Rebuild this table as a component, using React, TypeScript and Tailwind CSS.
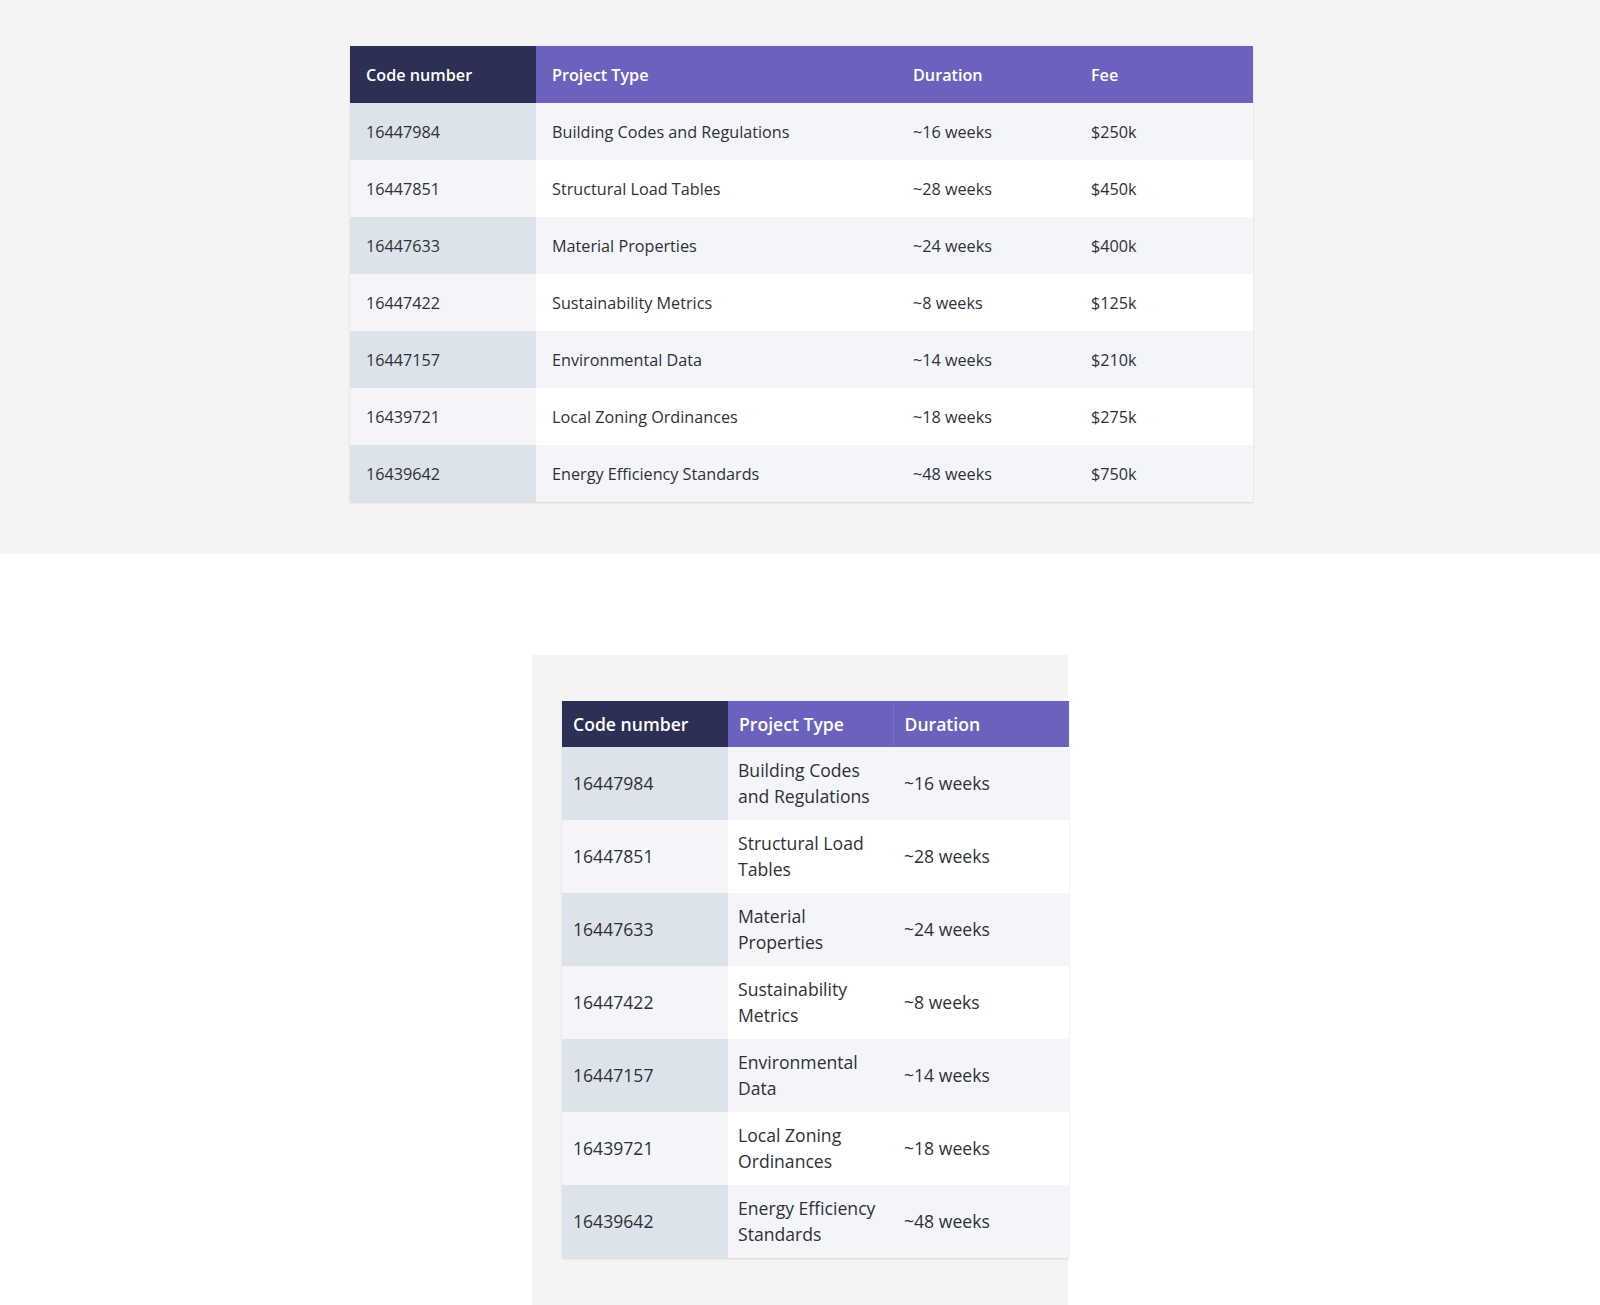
import React from 'react';

const rows = [
    { code: '16447984', type: 'Building Codes and Regulations', duration: '~16 weeks', fee: '$250k' },
    { code: '16447851', type: 'Structural Load Tables', duration: '~28 weeks', fee: '$450k' },
    { code: '16447633', type: 'Material Properties', duration: '~24 weeks', fee: '$400k' },
    { code: '16447422', type: 'Sustainability Metrics', duration: '~8 weeks', fee: '$125k' },
    { code: '16447157', type: 'Environmental Data', duration: '~14 weeks', fee: '$210k' },
    { code: '16439721', type: 'Local Zoning Ordinances', duration: '~18 weeks', fee: '$275k' },
    { code: '16439642', type: 'Energy Efficiency Standards', duration: '~48 weeks', fee: '$750k' },
];

const WideTable: React.FC = () => (
    <table className="w-[903px] border-collapse table-fixed text-[16.2px] text-[#2f3138] shadow-[0_1px_2px_rgba(0,0,0,0.12)]">
        <colgroup>
            <col className="w-[186px]" />
            <col className="w-[361px]" />
            <col className="w-[178px]" />
            <col className="w-[178px]" />
        </colgroup>
        <thead>
            <tr className="h-[57px] text-white text-left">
                <th className="bg-[#2b3054] px-4 pt-[2px] font-semibold">Code number</th>
                <th className="bg-[#6a62bc] px-4 pt-[2px] font-semibold">Project Type</th>
                <th className="bg-[#6a62bc] px-4 pt-[2px] font-semibold">Duration</th>
                <th className="bg-[#6a62bc] px-4 pt-[2px] font-semibold">Fee</th>
            </tr>
        </thead>
        <tbody>
            {rows.map((r, i) => {
                const odd = i % 2 === 0;
                return (
                    <tr key={r.code} className={`h-[57px] ${odd ? 'bg-[#f3f5f9]' : 'bg-white'}`}>
                        <td className={`px-4 pt-[2px] ${odd ? 'bg-[#dde3ea]' : 'bg-[#f3f5f9]'}`}>{r.code}</td>
                        <td className="px-4 pt-[2px]">{r.type}</td>
                        <td className="px-4 pt-[2px]">{r.duration}</td>
                        <td className="px-4 pt-[2px]">{r.fee}</td>
                    </tr>
                );
            })}
        </tbody>
    </table>
);

const NarrowTable: React.FC = () => (
    <table className="w-[507px] border-collapse table-fixed text-[17.6px] leading-[26px] text-[#2f3138] shadow-[0_1px_2px_rgba(0,0,0,0.12)]">
        <colgroup>
            <col className="w-[166px]" />
            <col className="w-[165px]" />
            <col className="w-[176px]" />
        </colgroup>
        <thead>
            <tr className="h-[46px] text-white text-left">
                <th className="bg-[#2b3054] px-[11px] font-semibold">Code number</th>
                <th className="bg-[#6a62bc] px-[11px] font-semibold border-r border-[#7a73c6]">Project Type</th>
                <th className="bg-[#6a62bc] px-[11px] font-semibold">Duration</th>
            </tr>
        </thead>
        <tbody>
            {rows.map((r, i) => {
                const odd = i % 2 === 0;
                return (
                    <tr key={r.code} className={`h-[73px] ${odd ? 'bg-[#f3f5f9]' : 'bg-white'}`}>
                        <td className={`px-[11px] pb-[2px] ${odd ? 'bg-[#dde3ea]' : 'bg-[#f3f5f9]'}`}>{r.code}</td>
                        <td className="pl-[10px] pr-3 pb-[2px]">{r.type}</td>
                        <td className="px-[11px] pb-[2px]">{r.duration}</td>
                    </tr>
                );
            })}
        </tbody>
    </table>
);

export default function App() {
    return (
        <div className="min-h-[1305px] bg-white" style={{ fontFamily: '"Open Sans", "Noto Sans", sans-serif' }}>
            <section className="h-[554px] bg-[#f4f4f4] pt-[46px] pl-[3px] flex justify-center items-start">
                <WideTable />
            </section>
            <section className="flex justify-center pt-[101px]">
                <div className="w-[536px] h-[650px] bg-[#f4f4f4] pt-[46px] pl-[30px]">
                    <NarrowTable />
                </div>
            </section>
        </div>
    );
}
